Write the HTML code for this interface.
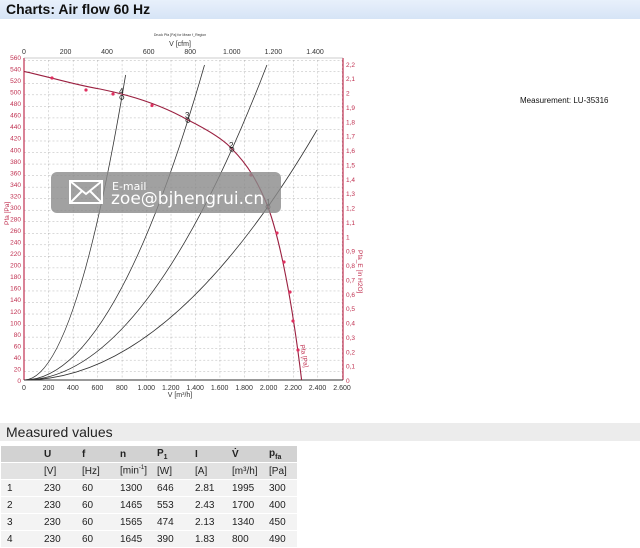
<!DOCTYPE html>
<html><head><meta charset="utf-8"><style>
body{margin:0;width:640px;height:547px;background:#fff;font-family:"Liberation Sans",Arial,sans-serif;position:relative;overflow:hidden}
.hdr{position:absolute;left:0;top:0;width:640px;height:19px;background:linear-gradient(#e8f0fb,#d6e4f6);}
.hdr span{position:absolute;left:6px;top:1px;font-size:14px;font-weight:bold;color:#111}
.mv{position:absolute;left:0;top:423px;width:640px;height:18px;background:#ececec}
.mv span{position:absolute;left:6px;top:1px;font-size:14px;color:#222}
table{position:absolute;left:1px;top:446px;border-collapse:separate;border-spacing:0;font-size:10px;color:#222}
td{height:16px;padding:0 0 0 6px;border-bottom:1px solid #fff}
tr.h1 td{background:#d2d2d2;font-weight:bold}
tr.h2 td{background:#e2e2e2}
tr.d td{background:#f3f3f3}
.m{position:absolute;left:520px;top:96px;font-size:8px;color:#111}
</style></head><body>
<div class="hdr"><span>Charts: Air flow 60 Hz</span></div>
<svg width="640" height="420" style="position:absolute;left:0;top:0" font-family="Liberation Sans,Arial,sans-serif">
<defs><pattern id="g" x="24" y="60" width="24.46" height="11.536" patternUnits="userSpaceOnUse">
<line x1="0" y1="0" x2="24.46" y2="0" stroke="#999" stroke-width="0.7" stroke-dasharray="2,2"/>
<line x1="0" y1="0" x2="0" y2="11.536" stroke="#999" stroke-width="0.7" stroke-dasharray="2,2"/></pattern></defs>
<rect x="24" y="60" width="319" height="320" fill="url(#g)"/>
<line x1="24" y1="58" x2="24" y2="380" stroke="#c03050" stroke-width="1.2"/>
<line x1="343" y1="58" x2="343" y2="380" stroke="#c03050" stroke-width="1.2"/>
<line x1="24" y1="380" x2="343" y2="380" stroke="#333" stroke-width="1"/>
<line x1="24" y1="58" x2="343" y2="58" stroke="#999" stroke-width="0.6"/>
<text x="180" y="36" font-size="3.5" text-anchor="middle" fill="#333">Druck Pfa [Pa] for Mean f_Region</text>
<text x="180" y="46" font-size="7" text-anchor="middle" fill="#333">V [cfm]</text>
<g font-size="7" fill="#333" text-anchor="middle">
<text x="24" y="54">0</text><text x="65.6" y="54">200</text><text x="107" y="54">400</text><text x="148.7" y="54">600</text><text x="190.2" y="54">800</text><text x="231.8" y="54">1.000</text><text x="273.4" y="54">1.200</text><text x="315" y="54">1.400</text>
<text x="24" y="390">0</text><text x="48.5" y="390">200</text><text x="72.9" y="390">400</text><text x="97.4" y="390">600</text><text x="121.8" y="390">800</text><text x="146.3" y="390">1.000</text><text x="170.8" y="390">1.200</text><text x="195.2" y="390">1.400</text><text x="219.7" y="390">1.600</text><text x="244.1" y="390">1.800</text><text x="268.6" y="390">2.000</text><text x="293.1" y="390">2.200</text><text x="317.5" y="390">2.400</text><text x="342" y="390">2.600</text>
<text x="180" y="397">V [m³/h]</text></g>
<g font-size="6.5" fill="#c03050" text-anchor="end">
<text x="21" y="383">0</text><text x="21" y="371.5">20</text><text x="21" y="359.9">40</text><text x="21" y="348.4">60</text><text x="21" y="336.9">80</text><text x="21" y="325.3">100</text><text x="21" y="313.8">120</text><text x="21" y="302.2">140</text><text x="21" y="290.7">160</text><text x="21" y="279.2">180</text><text x="21" y="267.6">200</text><text x="21" y="256.1">220</text><text x="21" y="244.6">240</text><text x="21" y="233">260</text><text x="21" y="221.5">280</text><text x="21" y="209.9">300</text><text x="21" y="198.4">320</text><text x="21" y="186.9">340</text><text x="21" y="175.4">360</text><text x="21" y="163.8">380</text><text x="21" y="152.3">400</text><text x="21" y="140.7">420</text><text x="21" y="129.2">440</text><text x="21" y="117.7">460</text><text x="21" y="106.1">480</text><text x="21" y="94.6">500</text><text x="21" y="83.1">520</text><text x="21" y="71.5">540</text><text x="21" y="60">560</text></g>
<g font-size="6.5" fill="#c03050">
<text x="346" y="383">0</text><text x="346" y="368.6">0,1</text><text x="346" y="354.3">0,2</text><text x="346" y="339.9">0,3</text><text x="346" y="325.5">0,4</text><text x="346" y="311.2">0,5</text><text x="346" y="296.8">0,6</text><text x="346" y="282.4">0,7</text><text x="346" y="268.1">0,8</text><text x="346" y="253.7">0,9</text><text x="346" y="239.3">1</text><text x="346" y="224.9">1,1</text><text x="346" y="210.6">1,2</text><text x="346" y="196.2">1,3</text><text x="346" y="181.8">1,4</text><text x="346" y="167.5">1,5</text><text x="346" y="153.1">1,6</text><text x="346" y="138.7">1,7</text><text x="346" y="124.3">1,8</text><text x="346" y="110">1,9</text><text x="346" y="95.6">2</text><text x="346" y="81.2">2,1</text><text x="346" y="66.9">2,2</text></g>
<text transform="translate(9,225) rotate(-90)" font-size="6.5" fill="#c03050">Pfa [Pa]</text>
<text transform="translate(358,250) rotate(90)" font-size="6.5" fill="#c03050">Pfa_E [in H2O]</text>
<text transform="translate(300,345) rotate(80)" font-size="6.5" fill="#c03050">Pfa [Pa]</text>
<g fill="none" stroke="#333" stroke-width="0.8">
<path d="M24,380 Q74.8,380 125.6,75"/>
<path d="M24,380 Q114.2,380 204.5,65"/>
<path d="M24,380 Q145.5,380 266.9,65"/>
<path d="M24,380 Q170.5,380 317,130"/>
</g>
<path fill="none" stroke="#9a2040" stroke-width="1.1" d="M24,71.4 C50,77 75,85 100,89 C130,95 160,104 188,120 C210,131 225,141 232,149 C248,165 258,182 268,207 C280,240 292,300 301.6,380"/>
<g fill="#e03060"><circle cx="52" cy="78" r="1.6"/><circle cx="86" cy="90" r="1.6"/><circle cx="113" cy="94" r="1.6"/><circle cx="152" cy="105.5" r="1.6"/><circle cx="251" cy="175" r="1.6"/><circle cx="277" cy="233" r="1.6"/><circle cx="284" cy="262" r="1.6"/><circle cx="290" cy="292" r="1.6"/><circle cx="293" cy="321" r="1.6"/><circle cx="298" cy="350" r="1.6"/></g>
<g fill="none" stroke="#222" stroke-width="0.8"><circle cx="121.8" cy="97.4" r="2"/><circle cx="187.9" cy="120.4" r="2"/><circle cx="231.9" cy="149.3" r="2"/><circle cx="268" cy="207" r="2"/></g>
<g font-size="8" fill="#222"><text x="119" y="94">4</text><text x="185" y="118">3</text><text x="229" y="148">2</text><text x="266" y="205">1</text></g>
<rect x="51" y="172" width="230" height="41" rx="6" fill="#8a8a8a" fill-opacity="0.8"/>
<g fill="none" stroke="#fff" stroke-width="2"><rect x="70" y="181" width="32" height="22"/><path d="M70,181 L86,194 L102,181 M70,203 L82,191 M102,203 L90,191"/></g>
<text x="112" y="190" font-size="11" fill="#fff" font-family="DejaVu Sans,sans-serif">E-mail</text>
<text x="111" y="204" font-size="17" fill="#fff" font-family="DejaVu Sans,sans-serif">zoe@bjhengrui.cn</text>
</svg>
<div class="m">Measurement: LU-35316</div>
<div class="mv"><span>Measured values</span></div>
<table>
<colgroup><col style="width:37px"><col style="width:38px"><col style="width:38px"><col style="width:37px"><col style="width:38px"><col style="width:37px"><col style="width:37px"><col style="width:34px"></colgroup>
<tr class="h1"><td></td><td>U</td><td>f</td><td>n</td><td>P<sub style="font-size:7px">1</sub></td><td>I</td><td>V̇</td><td>p<sub style="font-size:7px">fa</sub></td></tr>
<tr class="h2"><td></td><td>[V]</td><td>[Hz]</td><td>[min<sup style="font-size:6px">-1</sup>]</td><td>[W]</td><td>[A]</td><td>[m³/h]</td><td>[Pa]</td></tr>
<tr class="d"><td>1</td><td>230</td><td>60</td><td>1300</td><td>646</td><td>2.81</td><td>1995</td><td>300</td></tr>
<tr class="d"><td>2</td><td>230</td><td>60</td><td>1465</td><td>553</td><td>2.43</td><td>1700</td><td>400</td></tr>
<tr class="d"><td>3</td><td>230</td><td>60</td><td>1565</td><td>474</td><td>2.13</td><td>1340</td><td>450</td></tr>
<tr class="d"><td>4</td><td>230</td><td>60</td><td>1645</td><td>390</td><td>1.83</td><td>800</td><td>490</td></tr>
</table>
</body></html>
